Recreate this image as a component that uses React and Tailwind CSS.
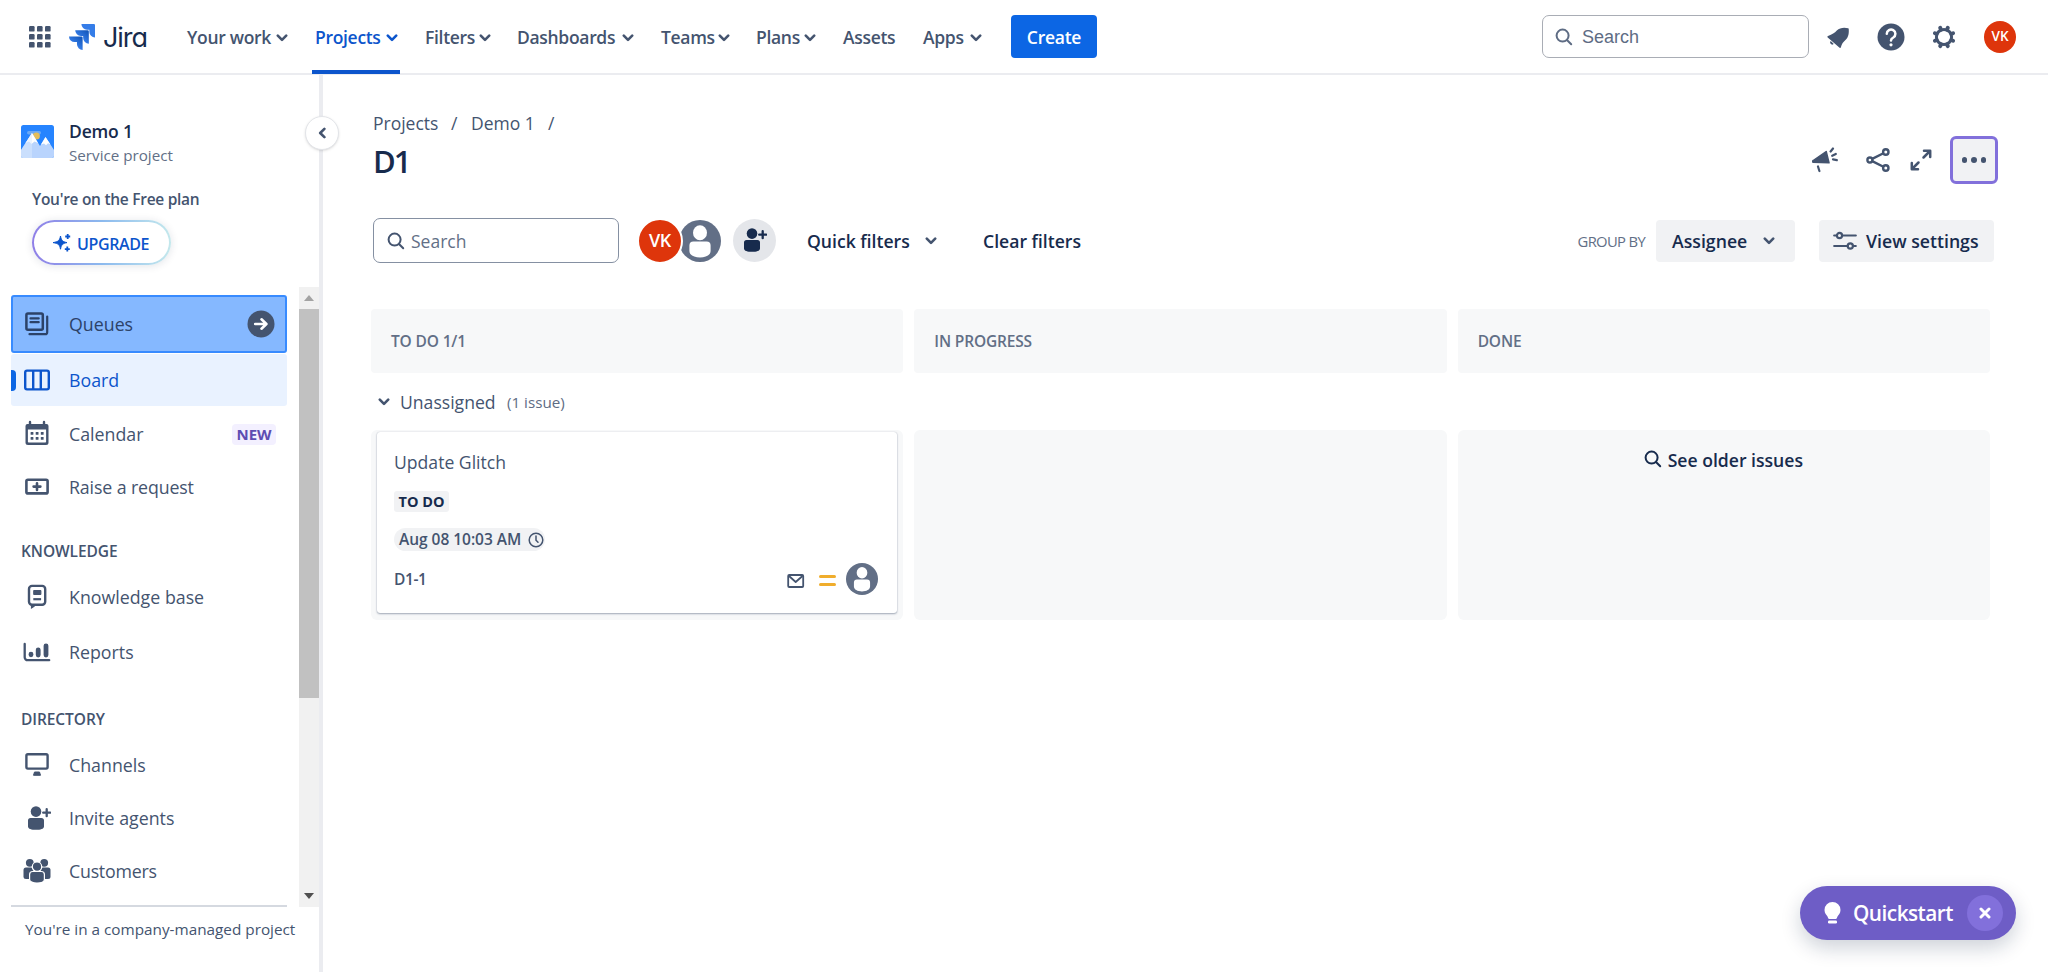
import clsx from "clsx";

const navItems = [
  { label: "Your work", width: "w-[128px]", text: "w-[89px]", menu: true },
  { label: "Projects", width: "w-[110px]", text: "w-[71px]", menu: true, active: true },
  { label: "Filters", width: "w-[92px]", text: "w-[54px]", menu: true },
  { label: "Dashboards", width: "w-[144px]", text: "w-[105px]", menu: true },
  { label: "Teams", width: "w-[95px]", text: "w-[57px]", menu: true },
  { label: "Plans", width: "w-[87px]", text: "w-[48px]", menu: true },
  { label: "Assets", width: "w-[80px]", text: "w-[60px]" },
  { label: "Apps", width: "w-[88px]", text: "w-[47px]", menu: true },
];

const columns = [{ title: "TO DO 1/1" }, { title: "IN PROGRESS" }, { title: "DONE" }];

/* icons */
const Chevron = ({ className }) => (
  <svg viewBox="0 0 12 8" className={clsx("h-2 w-3 shrink-0", className)} fill="none" stroke="currentColor" strokeWidth="2.6" strokeLinecap="round" strokeLinejoin="round">
    <path d="M1.8 1.6 6 5.8l4.2-4.2" />
  </svg>
);

const SearchIcon = ({ className }) => (
  <svg viewBox="0 0 18 18" className={clsx("h-[18px] w-[18px] shrink-0", className)} fill="none" stroke="currentColor" strokeWidth="2" strokeLinecap="round">
    <circle cx="7.6" cy="7.6" r="6" />
    <path d="m12.2 12.2 4 4" />
  </svg>
);

const AppsIcon = () => (
  <svg viewBox="0 0 22 22" className="h-[22px] w-[22px]" fill="#44546f">
    {[0, 8, 16].map((y) =>
      [0, 8, 16].map((x) => <rect key={`${x}-${y}`} x={x} y={y} width="5.6" height="5.6" rx="1.2" />),
    )}
  </svg>
);

const JiraMark = () => (
  <svg viewBox="0 0 24 24" className="h-[26px] w-[26px]">
    <defs>
      <linearGradient id="jira" x1="0.9" y1="0" x2="0.4" y2="0.6">
        <stop offset="0.1" stopColor="#1558bc" />
        <stop offset="1" stopColor="#357de8" />
      </linearGradient>
    </defs>
    <path fill="url(#jira)" d="M11.571 11.513H0a5.218 5.218 0 0 0 5.232 5.215h2.13v2.057A5.215 5.215 0 0 0 12.575 24V12.518a1.005 1.005 0 0 0-1.005-1.005z" />
    <path fill="url(#jira)" d="M17.294 5.757H5.736a5.215 5.215 0 0 0 5.215 5.214h2.129v2.058a5.218 5.218 0 0 0 5.215 5.214V6.758a1.001 1.001 0 0 0-1.001-1.001z" />
    <path fill="#357de8" d="M23.013 0H11.455a5.215 5.215 0 0 0 5.215 5.215h2.129v2.057A5.215 5.215 0 0 0 24 12.483V1.005A1.001 1.001 0 0 0 23.013 0Z" />
  </svg>
);

const BellIcon = () => (
  <svg viewBox="0 0 24 24" className="h-6 w-6" fill="#44546f">
    <path d="M22.2 3.200c-4.200-1.100-8.500-.6-11.400 2.400C8.600 8 6.300 9.600 2 11.100c-.7.3-.8.9-.3 1.400l11.900 10.200c.5.500 1.100.300 1.300-.4.800-3.500 2.300-5.200 4.800-7.500 3-2.900 3.400-7.200 3-11.100-.1-.3-.2-.4-.5-.5Z" />
    <path d="M4.300 16.500c-.8 1.600.7 3.500 2.600 3.100.7-.2.800-.6.400-1l-2.100-2.200c-.3-.3-.7-.3-.9.100Z" />
  </svg>
);

const HelpIcon = () => (
  <svg viewBox="0 0 28 28" className="h-7 w-7">
    <circle cx="14" cy="14" r="13.500" fill="#44546f" />
    <path d="M9.800 10.800a4.300 4.300 0 1 1 6.500 3.700c-1.500.8-2.300 1.300-2.300 3" fill="none" stroke="#fff" strokeWidth="2.500" strokeLinecap="round" />
    <circle cx="14" cy="21.800" r="1.600" fill="#fff" />
  </svg>
);

const GearIcon = () => (
  <svg viewBox="0 0 24 24" className="h-6 w-6" fill="none" stroke="#44546f">
    <circle cx="12" cy="12" r="7.600" strokeWidth="3" />
    {[22.5, 67.5, 112.5, 157.5, 202.5, 247.5, 292.5, 337.5].map((deg) => (
      <path key={deg} d="M12 4V2.200" strokeWidth="4" strokeLinecap="round" transform={`rotate(${deg} 12 12)`} />
    ))}
  </svg>
);

const PersonAvatar = ({ className }) => (
  <svg viewBox="0 0 42 42" className={className}>
    <circle cx="21" cy="21" r="21" fill="#626f86" />
    <ellipse cx="21" cy="12.800" rx="7" ry="7.500" fill="#fff" />
    <path d="M10.400 25.500a4 4 0 0 1 4-4h13.200a4 4 0 0 1 4 4v5.500c0 4-4.700 6.500-10.600 6.500s-10.600-2.500-10.600-6.500Z" fill="#fff" />
  </svg>
);

const PersonAdd = ({ className }) => (
  <svg viewBox="0 0 24 24" className={className} fill="currentColor">
    <circle cx="9" cy="5.600" r="5.300" />
    <path d="M1 14.600A2.600 2.600 0 0 1 3.600 12h10.800a2.600 2.600 0 0 1 2.600 2.600v5.800c0 2.400-3.600 3.400-8 3.400s-8-1-8-3.400Z" />
    <path d="M19.700 3.200v7M16.200 6.700h7" stroke="currentColor" strokeWidth="2.300" strokeLinecap="round" />
  </svg>
);

const MegaphoneIcon = () => (
  <svg viewBox="0 0 26 26" className="h-[26px] w-[26px]" fill="none" stroke="#44546f" strokeWidth="2.200" strokeLinecap="round">
    <path d="M14.200 4.500 17 15.800 1.200 15.200c-.7-.1-.8-1.200 0-1.700Z" fill="#44546f" strokeWidth="1.500" strokeLinejoin="round" />
    <path d="m6 19.500 1.400 4.500M18.600 4.500l2.400-3M20.200 8.800l3.600-1.800M21 12.400l3.800.8" />
  </svg>
);

const ShareIcon = () => (
  <svg viewBox="0 0 24 24" className="h-6 w-6" fill="none" stroke="#44546f" strokeWidth="2.400">
    <circle cx="3.900" cy="12" r="2.500" />
    <circle cx="19.800" cy="4" r="2.700" />
    <circle cx="19.800" cy="20" r="2.700" />
    <path d="m6.200 10.900 11.200-5.700M6.200 13.100l11.200 5.700" />
  </svg>
);

const ExpandIcon = () => (
  <svg viewBox="0 0 22 22" className="h-[22px] w-[22px]" fill="none" stroke="#44546f" strokeWidth="2.500" strokeLinecap="round" strokeLinejoin="round">
    <path d="M14 1.800h6.200V8M20 2l-6.500 6.500M8 20.200H1.800V14M2 20l6.500-6.500" />
  </svg>
);

const SlidersIcon = () => (
  <svg viewBox="0 0 24 20" className="h-5 w-6" fill="none" stroke="#44546f" strokeWidth="2.200" strokeLinecap="round">
    <path d="M1.200 4.500h2.600M9.200 4.500h13.600M1.200 15h13.400M20 15h2.800" />
    <circle cx="6.500" cy="4.500" r="2.600" />
    <circle cx="17.300" cy="15" r="2.600" />
  </svg>
);

const QueuesIcon = () => (
  <svg viewBox="0 0 28 28" className="h-7 w-7" fill="none" stroke="currentColor" strokeWidth="2.500" strokeLinecap="round">
    <rect x="3.400" y="3.400" width="16.400" height="16.400" rx="1.500" />
    <path d="M7.500 8.400h8.200M7.500 12.200h8.200M24.200 6.500v15.700a2 2 0 0 1-2 2H6.500" strokeWidth="2.200" />
  </svg>
);

const BoardIcon = () => (
  <svg viewBox="0 0 28 28" className="h-7 w-7" fill="none" stroke="currentColor" strokeWidth="2.400">
    <rect x="2.200" y="4.600" width="23.600" height="18.800" rx="1.800" />
    <path d="M10.200 4.500v19M17.800 4.500v19" />
  </svg>
);

const CalendarIcon = () => (
  <svg viewBox="0 0 28 28" className="h-7 w-7" fill="currentColor">
    <path d="M7 2v5M21 2v5" stroke="currentColor" strokeWidth="2.400" strokeLinecap="round" />
    <path fillRule="evenodd" d="M4.500 4h19a2 2 0 0 1 2 2v16.500a2.500 2.500 0 0 1-2.500 2.500H5a2.500 2.500 0 0 1-2.500-2.500V6a2 2 0 0 1 2-2ZM4.900 9.500v12.300c0 .5.300.8.800.8h16.600c.5 0 .8-.3.800-.8V9.500Z" />
    {[7.600, 12.700, 17.800].map((x) =>
      [12, 17].map((y) => <rect key={`${x}-${y}`} x={x} y={y} width="2.800" height="2.800" rx=".5" />),
    )}
  </svg>
);

const RequestIcon = () => (
  <svg viewBox="0 0 28 28" className="h-7 w-7" fill="none" stroke="currentColor" strokeWidth="2.600">
    <rect x="3.400" y="6.800" width="21.200" height="13.600" rx="1.500" />
    <path d="M14 10.200V17M10.600 13.600h6.800" strokeLinecap="round" />
  </svg>
);

const KnowledgeIcon = () => (
  <svg viewBox="0 0 28 28" className="h-7 w-7" fill="none" stroke="currentColor" strokeWidth="2.400">
    <rect x="6" y="2.900" width="16.200" height="18.800" rx="3" />
    <path d="M10.700 7.500h7.200v4h-7.200Z" fill="currentColor" strokeWidth="1" />
    <path d="M10.300 16.200h7.800" strokeWidth="2.200" />
    <path d="M8.500 22v3l3-2" fill="currentColor" strokeWidth="1.200" />
  </svg>
);

const ReportsIcon = () => (
  <svg viewBox="0 0 28 28" className="h-7 w-7" fill="none" stroke="currentColor" strokeLinecap="round">
    <path d="M1.700 6v13.200a3 3 0 0 0 3 3h21.500" strokeWidth="2.300" />
    <path d="M8 16.200v.6M15.200 11.800v5.200M23 7.800V17" strokeWidth="4.800" />
  </svg>
);

const MonitorIcon = () => (
  <svg viewBox="0 0 28 28" className="h-7 w-7" fill="none" stroke="currentColor" strokeWidth="2.400">
    <rect x="3.400" y="3.300" width="21.200" height="14.300" rx="1.500" />
    <path d="M11.500 21h5l1 3.300h-7Z" fill="currentColor" strokeWidth="1" strokeLinejoin="round" />
  </svg>
);

const CustomersIcon = () => (
  <svg viewBox="0 0 28 28" className="h-7 w-7" fill="currentColor">
    <circle cx="6.800" cy="5.800" r="3.900" />
    <circle cx="21.200" cy="5.800" r="3.900" />
    <rect x=".5" y="10.500" width="10" height="11.500" rx="2.500" />
    <rect x="17.500" y="10.500" width="10" height="11.500" rx="2.500" />
    <g stroke="#fff" strokeWidth="1.200">
      <circle cx="14" cy="9.700" r="4.700" />
      <path d="M6.600 17.500a3 3 0 0 1 3-3h8.800a3 3 0 0 1 3 3v5c0 2.200-3.300 3.600-7.400 3.600s-7.400-1.400-7.400-3.600Z" />
    </g>
  </svg>
);

const MountainsAvatar = () => (
  <svg viewBox="0 0 33 33" className="h-[33px] w-[33px]">
    <rect width="33" height="33" rx="2.500" fill="#2684ff" />
    <rect x="6" y="6" width="14" height="3.500" rx="1.700" fill="#6ba9f5" />
    <circle cx="15.300" cy="11" r="3.600" fill="#e3bd5b" />
    <path d="M0 25 11 8l8 13 5.500-9L33 25v6a2 2 0 0 1-2 2H2a2 2 0 0 1-2-2Z" fill="#b9d4fd" />
    <path d="M11 8 4.500 18l3.500-1.500 2.500 2.500 3-2.500 3.500 1.500ZM24.500 12l-4.500 7.500 3-1 2 1.800 2-2 2.400 1Z" fill="#fff" />
    <path d="M0 25 11 8v25H2a2 2 0 0 1-2-2Z" fill="#dce9fe" opacity=".5" />
  </svg>
);

const SparkleIcon = () => (
  <svg viewBox="0 0 18 18" className="h-[18px] w-[18px]" fill="#0c55cc">
    <path d="M7.500 2c.9 4.500 2 5.700 6.500 6.600-4.500.9-5.600 2.100-6.500 6.600C6.600 10.700 5.500 9.500 0 8.600 5.500 7.700 6.600 6.500 7.500 2Z" stroke="#0c55cc" strokeWidth="1" />
    <path d="M14.700 0v5M12.200 2.500h5M14.300 12.600v5M11.800 15.100h5" stroke="#0c55cc" strokeWidth="1.800" />
  </svg>
);

/* sidebar */
const SidebarItem = ({ icon, label, height = "h-[52px]", className, children }) => (
  <div className={clsx("flex items-center pl-3", height, className ?? "text-[#44546f]")}>
    <span className="w-[46px] shrink-0">{icon}</span>
    <span className="flex-1 pt-px text-[17.800px] whitespace-nowrap">{label}</span>
    {children}
  </div>
);

const SidebarHeading = ({ children, className }) => (
  <p className={clsx("flex h-10 items-center pt-[2px] pl-[10px] text-[15.500px] font-semibold tracking-[-0.005em] text-[#44546f]", className)}>{children}</p>
);

const Sidebar = () => (
  <aside className="relative flex w-[323px] shrink-0 flex-col border-r-4 border-[#ebecf0] bg-white">
    <button className="absolute top-[41px] left-[305px] flex h-[34px] w-[34px] items-center justify-center rounded-full border border-[#e3e5e9] bg-white text-[#44546f] shadow-sm">
      <Chevron className="rotate-90" />
    </button>

    {/* project */}
    <div className="mt-[42px] flex h-[52px] pl-[21px]">
      <div className="mt-2 w-[48px]">
        <MountainsAvatar />
      </div>
      <div>
        <p className="text-[17.500px] leading-[28px] font-semibold tracking-[-0.01em] text-[#172b4d]">Demo 1</p>
        <p className="text-[15.200px] leading-[20px] text-[#626f86]">Service project</p>
      </div>
    </div>

    {/* plan */}
    <div className="mt-[17px] h-[101px] pl-8">
      <p className="text-[15.500px] leading-[26px] font-semibold tracking-[-0.018em] text-[#44546f]">You're on the Free plan</p>
      <div className="mt-2 h-[45px] w-[139px] rounded-full bg-linear-to-r from-[#8f7ee7] via-[#8bb9ee] to-[#c4e8ec] p-[2px] shadow-[0_1px_8px_rgba(9,30,66,0.12)]">
        <button className="flex h-full w-full items-center rounded-full bg-white pl-[19px]">
          <SparkleIcon />
          <span className="pt-[2px] pl-[6px] text-[16px] font-semibold tracking-[-0.025em] text-[#0c55cc]">UPGRADE</span>
        </button>
      </div>
    </div>

    {/* menu */}
    <div className="flex h-[620px]">
      <nav className="mr-3 ml-[11px] flex w-[276px] flex-col border-b-2 border-[#d5d9e0] pt-2">
        <SidebarItem
          icon={<QueuesIcon />}
          label="Queues"
          height="h-[58px]"
          className="rounded-[3px] border-2 border-[#388bff] bg-[#85b8ff] pl-[10px] text-[#2c4268]"
        >
          <svg viewBox="0 0 28 28" className="mr-[10px] h-7 w-7">
            <circle cx="14" cy="14" r="13.500" fill="#44546f" />
            <path d="M8.200 14h11M14.500 9.300l4.900 4.700-4.900 4.700" fill="none" stroke="#fff" strokeWidth="2.600" strokeLinecap="round" strokeLinejoin="round" />
          </svg>
        </SidebarItem>
        <div className="mt-px flex rounded-[3px] bg-[#e9f2ff]">
          <span className="-mr-[5px] h-[21px] w-[5px] self-center rounded-r-[4px] bg-[#0c66e4]" />
          <SidebarItem icon={<BoardIcon />} label="Board" className="text-[#0c55cc]" />
        </div>
        <SidebarItem icon={<CalendarIcon />} label="Calendar" className="mt-[2px] text-[#44546f]">
          <span className="mr-[11px] flex h-[21px] w-11 items-center justify-center rounded bg-[#f3f0ff] text-[15px] font-bold text-[#5e4db2]">NEW</span>
        </SidebarItem>
        <SidebarItem icon={<RequestIcon />} label="Raise a request" className="mt-px tracking-[-0.008em] text-[#44546f]" />
        <SidebarHeading className="mt-[18px]">KNOWLEDGE</SidebarHeading>
        <SidebarItem icon={<KnowledgeIcon />} label="Knowledge base" className="text-[#44546f]" />
        <SidebarItem icon={<ReportsIcon />} label="Reports" className="mt-[3px] text-[#44546f]" />
        <SidebarHeading className="mt-[21px]">DIRECTORY</SidebarHeading>
        <SidebarItem icon={<MonitorIcon />} label="Channels" className="text-[#44546f]" />
        <SidebarItem icon={<PersonAdd className="ml-1 h-6 w-6" />} label="Invite agents" className="mt-px text-[#44546f]" />
        <SidebarItem icon={<CustomersIcon />} label="Customers" className="mt-px tracking-[-0.015em] text-[#44546f]" />
      </nav>

      {/* scrollbar */}
      <div className="flex w-5 flex-col items-center bg-[#f1f1f1]">
        <div className="flex h-[22px] items-center">
          <span className="border-x-[5px] border-b-[6px] border-x-transparent border-b-[#a3a3a3]" />
        </div>
        <div className="h-[389px] w-5 bg-[#c1c1c1]" />
        <div className="mt-auto flex h-[22px] items-center">
          <span className="border-x-[5px] border-t-[6px] border-x-transparent border-t-[#505050]" />
        </div>
      </div>
    </div>

    <p className="pt-[10px] pl-[25px] text-[15.300px] leading-6 whitespace-nowrap text-[#44546f]">You're in a company-managed project</p>
  </aside>
);

const Header = () => (
  <header className="flex h-[75px] shrink-0 items-center border-b-2 border-[#ebecf0] pl-[29px]">
    <AppsIcon />
    <div className="ml-[18px] flex w-[118px] items-center">
      <JiraMark />
      <span className="pt-px pl-2 font-[Inter,sans-serif] text-[27px] leading-none tracking-[-0.04em] text-[#172b4d] [font-feature-settings:'cv11']">Jira</span>
    </div>

    <nav className="flex h-full">
      {navItems.map((item) => (
        <div key={item.label} className={clsx("relative flex h-full items-center", item.width, item.active ? "text-[#0c55cc]" : "text-[#44546f]")}>
          <span className={clsx("pt-px text-[17.500px] font-semibold tracking-[-0.018em] whitespace-nowrap", item.text)}>{item.label}</span>
          {item.menu && <Chevron className="mt-[2px]" />}
          {item.active && <span className="absolute -bottom-px -left-[3px] h-1 w-[88px] bg-[#0c55cc]" />}
        </div>
      ))}
    </nav>

    <button className="h-[43px] w-[86px] rounded-[4px] bg-[#0c66e4] pt-px text-[17.500px] font-semibold tracking-[-0.015em] text-white">Create</button>

    <div className="ml-auto flex h-[43px] w-[267px] items-center rounded-[7px] border border-[#a9adb5] pl-3 text-[#5e6c84]">
      <SearchIcon className="mt-px" />
      <span className="pt-px pl-[9px] font-['Liberation_Sans',Arial,sans-serif] text-[18px]">Search</span>
    </div>
    <div className="flex items-center pr-8 pl-[17px]">
      <BellIcon />
      <span className="ml-[27px]"><HelpIcon /></span>
      <span className="mr-7 ml-[27px]"><GearIcon /></span>
      <span className="flex h-8 w-8 items-center justify-center rounded-full bg-[#de350b] text-[13.500px] font-semibold text-white">VK</span>
    </div>
  </header>
);

const IssueCard = () => (
  <div className="mx-[6px] mt-[2px] h-[181px] rounded-[3px] bg-white px-[17px] pt-[18px] text-[#44546f] shadow-[0_1px_2px_rgba(9,30,66,0.35),0_0_1px_rgba(9,30,66,0.25)]">
    <p className="text-[17.600px] leading-6">Update Glitch</p>
    <span className="mt-[17px] flex h-[21px] w-[55px] items-center justify-center rounded-[3px] bg-[#f1f2f4] text-[14.500px] font-bold text-[#172b4d]">TO DO</span>
    <span className="mt-4 flex h-[23px] w-[151px] items-center rounded-full bg-[#f1f2f4] pl-[5px] text-[15.500px] font-semibold tracking-[-0.002em]">
      <span className="w-[129px] pt-px whitespace-nowrap">Aug 08 10:03 AM</span>
      <svg viewBox="0 0 16 16" className="h-4 w-4 shrink-0" fill="none" stroke="#44546f" strokeWidth="1.500" strokeLinecap="round">
        <circle cx="8" cy="8" r="6.800" />
        <path d="M8 4v4.200l2 2" />
      </svg>
    </span>
    <div className="mt-3 flex h-8 items-center">
      <span className="pt-[2px] text-[15.500px] font-semibold tracking-[-0.025em]">D1-1</span>
      <svg viewBox="0 0 18 16" className="mt-[3px] ml-auto h-4 w-[18px]" fill="none" stroke="#44546f" strokeWidth="1.800" strokeLinejoin="round">
        <rect x="1.200" y="2" width="15" height="12" rx="1" />
        <path d="m2 3 6.700 6L15.500 3" />
      </svg>
      <span className="mt-[3px] mr-[10px] ml-[14px] flex w-[17px] flex-col gap-[5px]">
        <span className="h-[3px] rounded-full bg-[#f0ad2c]" />
        <span className="h-[3px] rounded-full bg-[#f0ad2c]" />
      </span>
      <PersonAvatar className="mr-[2px] h-8 w-8" />
    </div>
  </div>
);

const Board = () => (
  <section className="mt-[46px] ml-[48px] w-[1619px]">
    <div className="grid grid-cols-3 gap-[11px]">
      {columns.map((column) => (
        <div key={column.title} className="flex h-[64px] items-center rounded-[4px] bg-[#f7f8f9] pt-[2px] pl-5 text-[15.500px] font-semibold tracking-[-0.01em] text-[#626f86]">
          {column.title}
        </div>
      ))}
    </div>

    <div className="flex h-[57px] items-center pl-[7px] text-[#44546f]">
      <Chevron className="mt-px" />
      <span className="w-[106px] pt-px pl-[10px] text-[17.600px]">Unassigned</span>
      <span className="pt-px pl-[11px] text-[15.200px] text-[#5e6c84]">(1 issue)</span>
    </div>

    <div className="grid grid-cols-3 gap-[11px]">
      <div className="h-[190px] rounded-[6px] bg-[#f7f8f9]">
        <IssueCard />
      </div>
      <div className="h-[190px] rounded-[6px] bg-[#f7f8f9]" />
      <div className="h-[190px] rounded-[6px] bg-[#f7f8f9]">
        <button className="mx-auto mt-[17px] flex h-6 items-center text-[#172b4d]">
          <SearchIcon />
          <span className="pt-[2px] pr-px pl-[6px] text-[17.600px] font-semibold">See older issues</span>
        </button>
      </div>
    </div>
  </section>
);

export default function App() {
  return (
    <div className="flex h-[972px] w-[2048px] flex-col overflow-hidden bg-white font-['Open_Sans','Noto_Sans',sans-serif] text-[#172b4d]">
      <Header />
      <div className="flex flex-1">
        <Sidebar />

        <main className="flex-1">
          {/* breadcrumbs and page actions */}
          <div className="flex h-[143px] pt-[34px] pr-[50px] pl-[50px]">
            <div>
              <div className="flex h-7 items-center text-[17.500px] text-[#44546f]">
                <span className="w-[78px]">Projects</span>
                <span className="w-5">/</span>
                <span className="w-[77px]">Demo 1</span>
                <span>/</span>
              </div>
              <h1 className="text-[31px] leading-[48px] font-semibold tracking-[-0.06em]">D1</h1>
            </div>
            <div className="mt-[27px] ml-auto flex h-12 items-center">
              <MegaphoneIcon />
              <span className="ml-[28px]"><ShareIcon /></span>
              <span className="mr-[18px] ml-5"><ExpandIcon /></span>
              <button className="flex h-12 w-12 items-center justify-center gap-1 rounded-[6px] border-[3px] border-[#8270db] bg-[#f1f2f4]">
                <span className="h-[5.5px] w-[5.5px] rounded-full bg-[#44546f]" />
                <span className="h-[5.5px] w-[5.5px] rounded-full bg-[#44546f]" />
                <span className="h-[5.5px] w-[5.5px] rounded-full bg-[#44546f]" />
              </button>
            </div>
          </div>

          {/* toolbar */}
          <div className="flex h-[45px] items-center pr-[54px] pl-[50px]">
            <div className="flex h-[45px] w-[246px] items-center rounded-[7px] border border-[#8590a2] pl-[13px] text-[#44546f]">
              <SearchIcon />
              <span className="pt-px pl-[6px] text-[17.500px] text-[#626f86]">Search</span>
            </div>
            <span className="z-10 ml-[18px] flex h-[46px] w-[46px] items-center justify-center rounded-full border-2 border-white bg-[#de350b] text-[18px] font-semibold tracking-[-0.02em] text-white">VK</span>
            <PersonAvatar className="-ml-[4px] h-[42px] w-[42px]" />
            <span className="ml-3 flex h-[43px] w-[43px] items-center justify-center rounded-full bg-[#e4e6ea] text-[#172b4d]">
              <PersonAdd className="mb-[2px] h-6 w-6" />
            </span>
            <span className="ml-[31px] w-[118px] pt-px text-[17.600px] font-semibold whitespace-nowrap">Quick filters</span>
            <Chevron className="text-[#44546f]" />
            <span className="ml-[46px] pt-px text-[17.600px] font-semibold whitespace-nowrap">Clear filters</span>

            <span className="mr-[11px] ml-auto pt-px text-[14.800px] tracking-[-0.045em] text-[#626f86]">GROUP BY</span>
            <button className="flex h-[42px] w-[139px] items-center rounded-[4px] bg-[#f1f2f4] pl-4">
              <span className="w-[91px] pt-px text-left text-[17.700px] font-semibold">Assignee</span>
              <Chevron className="text-[#44546f]" />
            </button>
            <button className="ml-6 flex h-[42px] w-[175px] items-center rounded-[4px] bg-[#f1f2f4] pl-[14px]">
              <SlidersIcon />
              <span className="pt-px pl-[9px] text-[17.700px] font-semibold whitespace-nowrap">View settings</span>
            </button>
          </div>

          <Board />
        </main>
      </div>

      {/* quickstart pill floats over the board */}
      <div className="absolute top-[886px] left-[1800px] flex h-[54px] w-[216px] items-center rounded-full bg-[#6e5dc6] pl-6 text-white shadow-[0_8px_20px_rgba(9,30,66,0.2)]">
        <svg viewBox="0 0 17 22" className="h-[22px] w-[17px]" fill="currentColor">
          <path d="M8.500 0a8 8 0 0 1 8 8c0 3.400-2.100 4.800-3 6.600-.5 1-.5 2.400-1.800 2.400H5.300C4 17 4 15.600 3.500 14.600 2.600 12.800.5 11.400.5 8a8 8 0 0 1 8-8Z" />
          <rect x="4" y="18.500" width="9" height="3" rx="1.200" />
        </svg>
        <span className="w-[126px] pt-px pl-3 text-[20.800px] font-semibold tracking-[-0.025em]">Quickstart</span>
        <span className="flex h-9 w-9 items-center justify-center rounded-full bg-[#8270db]">
          <svg viewBox="0 0 12 12" className="h-3 w-3" stroke="currentColor" strokeWidth="3" strokeLinecap="round">
            <path d="m2 2 8 8M10 2l-8 8" />
          </svg>
        </span>
      </div>
    </div>
  );
}
